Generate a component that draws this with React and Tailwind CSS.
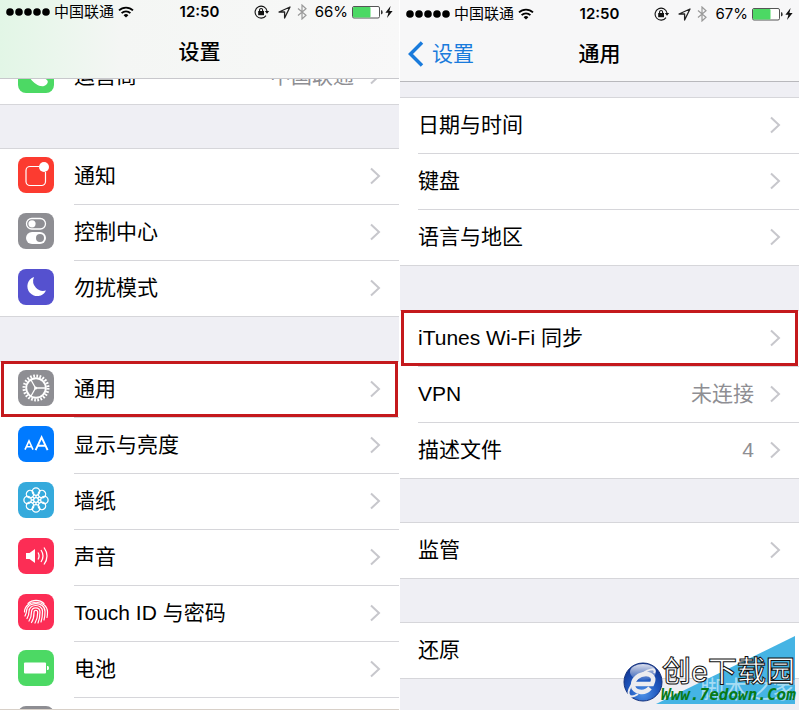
import React from "react";

const Dots = () => (
  <svg width="44" height="10" viewBox="0 0 44 10" fill="#000">
    {[4, 13, 22, 31, 40].map((x) => (
      <circle key={x} cx={x} cy="5" r="3.8" />
    ))}
  </svg>
);

const Wifi = () => (
  <svg width="16" height="12" viewBox="0 0 16 12" fill="none" stroke="#000" strokeWidth="1.8">
    <path d="M1 4.4a10 10 0 0 1 14 0" />
    <path d="M3.6 7.2a6.2 6.2 0 0 1 8.8 0" />
    <path d="M8 11.6 5.6 9.2a3.4 3.4 0 0 1 4.8 0z" fill="#000" stroke="none" />
  </svg>
);

const RotationLock = () => (
  <svg width="16" height="14" viewBox="0 0 16 14" fill="none" stroke="#111">
    <path d="M12 10.6A6 6 0 1 1 13 6" strokeWidth="1.1" />
    <path d="M10.8 6h4.4L13 8.8z" fill="#111" stroke="none" />
    <rect x="4.2" y="6" width="5.8" height="4.2" fill="#111" stroke="none" />
    <path d="M5.6 6.4V5a1.5 1.5 0 0 1 3 0v1.4" strokeWidth="1.1" />
  </svg>
);

const Location = () => (
  <svg width="13" height="13" viewBox="0 0 13 13" fill="none" stroke="#222" strokeWidth="1.3" strokeLinejoin="round">
    <path d="M12 1 1 6h5.6v6z" />
  </svg>
);

const Bluetooth = () => (
  <svg width="10" height="16" viewBox="0 0 10 16" fill="none" stroke="#999" strokeWidth="1.2">
    <path d="M1 4.5 9 11.3 5 15V1l4 3.7-8 6.8" />
  </svg>
);

const BatteryLevel = () => (
  <svg width="31" height="13" viewBox="0 0 31 13">
    <rect x="0.5" y="0.5" width="27" height="11.5" rx="1.5" fill="#fff" stroke="#555" />
    <rect x="1" y="1" width="17.5" height="10.5" rx="1" fill="#4cd964" />
    <path d="M29 4.2h.6q1 0 1 2t-1 2H29z" fill="#333" />
  </svg>
);

const Bolt = () => (
  <svg width="8" height="12" viewBox="0 0 8 12" fill="#111">
    <path d="M5.6 0 .4 6.8h3L2 12l5.6-7H4.4z" />
  </svg>
);

const Chevron = () => (
  <svg width="11" height="18" viewBox="0 0 11 18" fill="none" stroke="#c7c7cc" strokeWidth="2">
    <path d="m1 1.5 8 7.5-8 7.5" />
  </svg>
);

const PhoneIcon = () => (
  <svg viewBox="0 0 36 36">
    <path d="M11 8c2-2 4-1 5 1l2 4c0 2-3 2-2 4 1 2 3 4 5 4 1 0 2-2 4-1l4 3c2 2 0 5-3 6C17 31 5 16 11 8z" fill="#fff" />
  </svg>
);

const NoticeIcon = () => (
  <svg viewBox="0 0 36 36">
    <path d="M21 9.5H12a4 4 0 0 0-4 4v11a4 4 0 0 0 4 4h11.5a4 4 0 0 0 4-4V15" fill="none" stroke="#fff" strokeWidth="1.2" />
    <circle cx="26" cy="10" r="5" fill="#fff" />
  </svg>
);

const ControlIcon = () => (
  <svg viewBox="0 0 36 36">
    <rect x="8.5" y="5.5" width="19" height="10.5" rx="5.25" fill="none" stroke="#fff" strokeWidth="1.3" />
    <circle cx="14" cy="10.8" r="3.6" fill="#fff" />
    <rect x="8" y="19" width="20" height="12" rx="6" fill="#fff" />
    <circle cx="22" cy="25" r="4" fill="#8e8e93" />
  </svg>
);

const MoonIcon = () => (
  <svg viewBox="0 0 36 36">
    <path d="M16 8a9.8 9.8 0 1 0 12 13.5A10 10 0 0 1 16 8z" fill="#fff" />
  </svg>
);

const GearIcon = () => (
  <svg viewBox="0 0 36 36" fill="none" stroke="#fff">
    <circle cx="18" cy="18" r="9.8" strokeWidth="1.9" />
    <circle cx="18" cy="18" r="12" strokeWidth="3" strokeDasharray="1.7 1.442" />
    <path d="M17 18h11M17.5 18l-5-9M17.5 18l-5 9" strokeWidth="1.3" />
    <circle cx="17.6" cy="18" r="1.5" fill="#fff" stroke="none" />
  </svg>
);

const DisplayIcon = () => (
  <svg viewBox="0 0 36 36" fill="none" stroke="#fff">
    <path d="m7 23.7 4-8.7 4 8.7M8.6 20.8h4.8" strokeWidth="1.6" />
    <path d="m17.6 24.2 6-12.9 6 12.9M19.8 19.7h7.6" strokeWidth="1.9" />
  </svg>
);

const WallpaperIcon = () => (
  <svg viewBox="0 0 36 36" fill="none" stroke="#fff" strokeWidth="1.3">
    {[0, 45, 90, 135, 180, 225, 270, 315].map((a) => (
      <g key={a} transform={`rotate(${a} 18 18)`}>
        <circle cx="18" cy="9.6" r="3.7" />
        <path d="M18 13.2v2.6" />
      </g>
    ))}
    <circle cx="18" cy="18" r="2.4" />
  </svg>
);

const SoundIcon = () => (
  <svg viewBox="0 0 36 36" fill="none" stroke="#fff" strokeWidth="1.3">
    <path d="M8 15h3.5l5.500-4v14l-5.500-4H8z" fill="#fff" stroke="none" />
    <path d="M20 14.5q2.2 3.5 0 7M23 12q4 6 0 12M26 9.5q6 8.5 0 17" />
  </svg>
);

const TouchIcon = () => (
  <svg viewBox="0 0 36 36" fill="none" stroke="#fff" strokeWidth="1.2" strokeLinecap="round">
    <path d="M10 9.5a12 12 0 0 1 16 0" />
    <path d="M6.5 18c0-13 23-13 23 0 0 2 0 4-.5 5.5" />
    <path d="M7 22c1-2 1.5-3 1.500-5C9 7 27 7 27 17.500q0 5-1 8.500" />
    <path d="M9 24.500c1.500-2.500 2-4 2-7 0-8 13.500-8 13.500 0q0 6-1.500 10.500" />
    <path d="M11 27c2-3 2.500-6 2.500-9 0-5.500 8.500-5.500 8.500 0q0 6-2 11" />
    <path d="M13.500 28.500c2-3 2.500-6.500 2.500-10 0-3 3.700-3 3.700 0q0 6-2.700 10.500" />
  </svg>
);

const BatteryIcon = () => (
  <svg viewBox="0 0 36 36" fill="#fff">
    <rect x="6" y="12.5" width="22" height="11" rx="1" />
    <path d="M29 16h.7q1.300 0 1.300 2t-1.300 2H29z" />
  </svg>
);

const StatusBar = ({ percent, className }) => (
  <div className={`flex items-center px-1.5 ${className}`}>
    <div className="flex flex-1 items-center">
      <Dots />
      <span className="mx-1 text-[15px] leading-5">中国联通</span>
      <Wifi />
    </div>
    <span className="text-[15px] leading-5 font-semibold">12:50</span>
    <div className="flex flex-1 items-center justify-end">
      <RotationLock />
      <span className="ml-2">
        <Location />
      </span>
      <span className="ml-1.5">
        <Bluetooth />
      </span>
      <span className="mr-1 ml-2 text-[15px] leading-5">{percent}</span>
      <BatteryLevel />
      <span className="ml-0.5">
        <Bolt />
      </span>
    </div>
  </div>
);

const Row = ({ label, value, icon, color, marked, arrow = true }) => (
  <li className="group relative">
    <button className="flex h-14 w-full items-start border-[#d6d6da] pl-[18px] text-left group-last:border-b">
      {icon && (
        <span className={`mt-2 mr-5 size-9 shrink-0 overflow-hidden rounded-lg ${color}`}>
          {icon}
        </span>
      )}
      <span className="flex h-full flex-1 items-center border-b border-[#d6d6da] pr-[18px] pb-0.5 font-['Liberation_Sans','Noto_Sans_CJK_SC',sans-serif] group-last:border-b-0">
        <span className="flex-1 text-[21px] leading-7">{label}</span>
        {value && (
          <span className="mr-4 text-[21px] leading-7 text-[#8e8e93]">{value}</span>
        )}
        {arrow && <Chevron />}
      </span>
    </button>
    {marked && (
      <span className="pointer-events-none absolute inset-x-px -top-px bottom-px border-3 border-[#c4191d]" />
    )}
  </li>
);

const Group = ({ rows, className = "", children }) => (
  <ul className={`border-t border-[#d6d6da] bg-white ${className}`}>
    {rows.map((row) => (
      <Row key={row.label} {...row} />
    ))}
    {children}
  </ul>
);

const alerts = [
  { label: "通知", icon: <NoticeIcon />, color: "bg-[#fc3b30]" },
  { label: "控制中心", icon: <ControlIcon />, color: "bg-[#8e8e93]" },
  { label: "勿扰模式", icon: <MoonIcon />, color: "bg-[#5551cf]" },
];

const device = [
  { label: "通用", icon: <GearIcon />, color: "bg-[#8e8e93]", marked: true },
  { label: "显示与亮度", icon: <DisplayIcon />, color: "bg-[#007aff]" },
  { label: "墙纸", icon: <WallpaperIcon />, color: "bg-[#35aadc]" },
  { label: "声音", icon: <SoundIcon />, color: "bg-[#fc2d55]" },
  { label: "Touch ID 与密码", icon: <TouchIcon />, color: "bg-[#fc2d55]" },
  { label: "电池", icon: <BatteryIcon />, color: "bg-[#4cd964]" },
];

const SettingsScreen = () => (
  <section className="flex min-w-0 flex-col bg-[#efeff4]">
    <header className="h-[79px] border-b border-[#c8c8cc] bg-linear-to-r from-[#e2f6e6] via-[#f4f6f4] via-30% to-[#f8f8f8]">
      <StatusBar percent="66%" className="pt-0.5" />
      <h1 className="pt-4 text-center text-[21px] leading-7 font-medium">设置</h1>
    </header>
    <div className="flex h-[26px] flex-col justify-end overflow-hidden bg-white">
      <ul>
        <Row label="运营商" value="中国联通" icon={<PhoneIcon />} color="bg-[#4cd964]" />
      </ul>
    </div>
    <Group rows={alerts} className="mt-[43px]" />
    <Group rows={device} className="mt-11">
      <li className="h-3 overflow-hidden border-b border-[#d8d0c8] pt-2 pl-[18px]">
        <div className="size-9 rounded-lg bg-[#8e8e93]" />
      </li>
    </Group>
  </section>
);

const GeneralScreen = () => (
  <section className="flex min-w-0 flex-col bg-[#efeff4]">
    <header className="h-[82px] border-b border-[#b8b8bc] bg-[#f7f7f8]">
      <StatusBar percent="67%" className="pt-1" />
      <div className="grid grid-cols-3 items-center pt-4">
        <a href="#settings" className="flex items-center pl-2 text-[21px] leading-7 text-[#1a7bdc]">
          <svg className="mr-2" width="16" height="26" viewBox="0 0 16 26" fill="none" stroke="#1a7bdc" strokeWidth="3.5">
            <path d="M14 1.5 2.5 13 14 24.5" />
          </svg>
          设置
        </a>
        <h1 className="text-center text-[21px] leading-7 font-medium">通用</h1>
      </div>
    </header>
    <Group
      className="mt-[15px]"
      rows={[{ label: "日期与时间" }, { label: "键盘" }, { label: "语言与地区" }]}
    />
    <Group
      className="mt-11"
      rows={[
        { label: "iTunes Wi-Fi 同步", marked: true },
        { label: "VPN", value: "未连接" },
        { label: "描述文件", value: "4" },
      ]}
    />
    <Group className="mt-[43px]" rows={[{ label: "监管" }]} />
    <Group className="mt-[43px]" rows={[{ label: "还原", arrow: false }]} />
  </section>
);

const Watermark = () => (
  <div className="absolute right-0 bottom-0 h-[74px] w-[180px] overflow-hidden">
    <svg className="absolute inset-0" width="180" height="74" viewBox="0 0 180 74">
      <defs>
        <radialGradient id="globe" cx="50%" cy="80%" r="80%">
          <stop offset="0" stopColor="#4d92e8" />
          <stop offset="0.5" stopColor="#1f57be" />
          <stop offset="1" stopColor="#0e2f8c" />
        </radialGradient>
        <linearGradient id="shine" x1="0" y1="0" x2="0" y2="1">
          <stop offset="0" stopColor="#fff" stopOpacity="0.85" />
          <stop offset="1" stopColor="#fff" stopOpacity="0.1" />
        </linearGradient>
      </defs>
      <path d="M36 68 175 0v68z" fill="#45b4e4" />
      <circle cx="23" cy="46" r="19" fill="url(#globe)" stroke="#12307c" />
      <ellipse cx="23" cy="36" rx="13" ry="8" fill="url(#shine)" />
      <g fill="none" stroke="#ececf0">
        <path d="M15 48h17c3-6 0-10-6-10-7 0-13 5-13 11 0 8 12 9 17 3" strokeWidth="4.5" />
        <path d="M34 37c3-5-4-5-12 1S5 56 10 60c2 1 5 0 8-2" strokeWidth="2" />
      </g>
    </svg>
    <span className="absolute top-10 left-20 text-[24px] leading-7 whitespace-nowrap text-[#a5dcf3]">脚本之家</span>
    <span className="absolute top-[18px] left-[42px] text-[29px] leading-9 font-medium whitespace-nowrap text-white [-webkit-text-stroke:1px_#111]">
      创e下载园
    </span>
    <span className="absolute top-[49px] left-[41px] font-['DejaVu_Sans_Mono',monospace] text-[16px] leading-5 font-bold whitespace-nowrap text-[#087a18] italic">
      Www.7edown.Com
    </span>
  </div>
);

const App = () => {
  return (
    <main className="relative grid grid-cols-2 gap-px overflow-hidden bg-white pr-px font-[Inter,'Noto_Sans_CJK_SC',sans-serif] text-black">
      <SettingsScreen />
      <GeneralScreen />
      <Watermark />
    </main>
  );
};

export default App;
